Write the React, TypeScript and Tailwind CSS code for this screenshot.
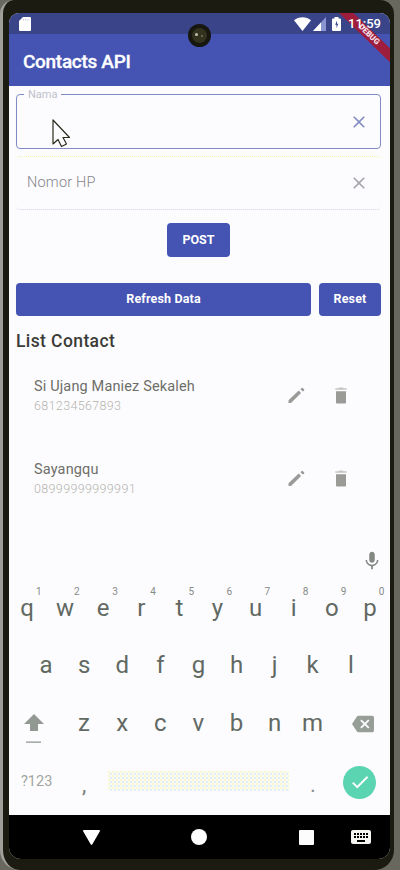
import React from "react";
import { MdMic, MdBackspace, MdKeyboard, MdCheck, MdClose } from "react-icons/md";

const ROW_1 = ["q", "w", "e", "r", "t", "y", "u", "i", "o", "p"];
const ROW_2 = ["a", "s", "d", "f", "g", "h", "j", "k", "l"];
const ROW_3 = ["z", "x", "c", "v", "b", "n", "m"];

const CONTACTS = [
  { name: "Si Ujang Maniez Sekaleh", phone: "681234567893" },
  { name: "Sayangqu", phone: "08999999999991" },
];

function StatusBar() {
  return (
    <div className="flex h-[21px] shrink-0 items-center bg-[#394489] pl-[10px] pr-[9px] text-white">
      <svg width="12" height="14" viewBox="0 0 12 14">
        <path d="M4 0h7a1 1 0 0 1 1 1v12a1 1 0 0 1-1 1H1a1 1 0 0 1-1-1V4z" fill="#fff" />
        <path d="M4.6 2v1.6M6.8 2v1.6M9 2v1.6" stroke="#b6badb" strokeWidth=".7" />
      </svg>
      <svg className="ml-auto" width="17" height="14" viewBox="0 0 17 14">
        <path d="M0 3.3C4.8-.9 12.2-.9 17 3.3L8.5 14z" fill="#fff" />
      </svg>
      <svg className="ml-[2px]" width="13" height="14" viewBox="0 0 13 14">
        <path d="M13 0v14H0z" fill="#8995cf" />
        <path d="M8 5.4V14H0z" fill="#fff" />
      </svg>
      <svg className="ml-[6px]" width="9" height="14" viewBox="0 0 9 14">
        <path d="M2.5 0h4v1.5H8a1 1 0 0 1 1 1V13a1 1 0 0 1-1 1H1a1 1 0 0 1-1-1V2.5a1 1 0 0 1 1-1h1.5z" fill="#fff" />
        <path d="M5 3.5 3.2 7.7h1.3v3.5l1.8-4.4H5z" fill="#394489" />
      </svg>
      <span className="relative z-10 ml-[7px] w-[33px] whitespace-nowrap text-[13px] font-medium leading-none">11:59</span>
    </div>
  );
}

function DebugBanner() {
  return (
    <div className="pointer-events-none absolute right-0 top-0 h-[52px] w-[52px] overflow-hidden">
      <div className="absolute left-[-16px] top-[15px] flex h-[10px] w-[90px] rotate-[44deg] items-center justify-center bg-[#9e1d3c] pl-[5px] text-[8px] font-black text-[#f4dfe6]">
        DEBUG
      </div>
    </div>
  );
}

function PencilIcon() {
  return (
    <svg width="17" height="17" viewBox="0 0 17 17" fill="#9a9a99" aria-hidden="true">
      <path d="M.5 13.2 10.7 3.6l2.4 2.4L3 16H.5z" />
      <path d="m12.4 2.2 1.3-1.3q.5-.4 1 0l1.4 1.4q.4.5 0 1l-1.3 1.3z" />
    </svg>
  );
}

function TrashIcon() {
  return (
    <svg width="12" height="17" viewBox="0 0 12 17" fill="#9a9a97" aria-hidden="true">
      <path d="M1 4.2h10v11q0 1.3-1.3 1.3H2.3Q1 16.500 1 15.200z" />
      <path d="M.3 1.300h3.200l.8-.8h3.400l.8.8h3.200v1.500H.3z" fill="#c4c4c0" />
    </svg>
  );
}

function Key({ label, hint }: { label: string; hint?: string }) {
  return (
    <div className="relative flex h-full w-[38.1px] items-center justify-center text-[24px] text-[#626963]">
      <span className="relative -top-[1px]">{label}</span>
      {hint && <span className="absolute left-[28px] top-[6px] text-[10px] leading-none text-[#858b87]">{hint}</span>}
    </div>
  );
}

export default function App() {
  return (
    <div className="relative flex h-[870px] w-[400px] flex-col overflow-hidden bg-[#68685f] font-['Roboto','Liberation_Sans',sans-serif]">
      <div className="mr-[6px] flex h-[870px] flex-col rounded-t-[14px] rounded-b-[20px] border-l-[3px] border-[#a09f99] bg-[#1b1b12] px-[1px]">
        <div className="relative ml-[5px] mr-[3px] mt-[13px] flex h-[846px] flex-col overflow-hidden rounded-t-[10px] rounded-b-[12px] bg-[#fcfcfe]">
          <StatusBar />
          <header className="flex h-[52px] shrink-0 items-center bg-[#4553b2] pl-[14px] pt-[4px] text-[19px] font-medium tracking-[-0.3px] text-white">
            <h1 className="[-webkit-text-stroke:0.3px_white]">Contacts API</h1>
          </header>

          <main className="flex h-[462px] shrink-0 flex-col pl-[7px] pr-[9px] pt-[8px]">
            <div className="relative flex h-[55px] shrink-0 items-center justify-end rounded-[4px] border-[1.5px] border-[#808bc6] pr-[11px]">
              <span className="absolute left-[7px] top-[-8px] bg-[#fcfcfe] px-[4px] text-[11px] leading-[16px] text-[#c0bfca]">Nama</span>
              <MdClose className="text-[#858ec2]" size={20} />
            </div>
            <div className="mt-[7px] flex h-[54px] shrink-0 items-center justify-between rounded-[4px] border-y border-dotted border-b-[#cfcfe8] border-t-[#f4f4aa] pl-[11px] pr-[12px]">
              <span className="text-[14.5px] font-light tracking-[0.2px] text-[#85858a]">Nomor HP</span>
              <MdClose className="text-[#a6a7ad]" size={20} />
            </div>
            <button className="ml-[151px] mt-[13px] h-[34px] w-[63px] shrink-0 rounded-[4px] bg-[#4553b2] text-[12.5px] font-bold text-white">POST</button>
            <div className="mt-[26px] flex h-[33px] shrink-0 gap-[8px] text-[12.5px] font-bold tracking-[0.15px] text-white">
              <button className="w-[295px] rounded-[4px] bg-[#4553b2]">Refresh Data</button>
              <button className="w-[62px] rounded-[4px] bg-[#4553b2]">Reset</button>
            </div>
            <h2 className="mt-[14px] h-[22px] shrink-0 text-[17.5px] font-medium leading-[22px] tracking-[0.4px] text-[#3b3b37]">List Contact</h2>
            <ul className="mt-[2px]">
              {CONTACTS.map((c) => (
                <li key={c.name} className="flex h-[83px] items-center pl-[18px]">
                  <div className="w-[254px]">
                    <p className="text-[14.5px] leading-[20px] tracking-[0.15px] text-[#6e6e69]">{c.name}</p>
                    <p className="text-[12.5px] font-light leading-[18px] tracking-[0.35px] text-[#b6b5af]">{c.phone}</p>
                  </div>
                  <PencilIcon />
                  <div className="ml-[30px]">
                    <TrashIcon />
                  </div>
                </li>
              ))}
            </ul>
          </main>

          <section className="flex h-[267px] shrink-0 flex-col">
            <div className="flex h-[33px] shrink-0 items-center justify-end pr-[7px]">
              <MdMic size={22} className="mb-[8px] text-[#858984]" />
            </div>
            <div className="ml-[-1px] flex h-[56px] shrink-0 items-center">
              {ROW_1.map((k, i) => (
                <Key key={k} label={k} hint={String((i + 1) % 10)} />
              ))}
            </div>
            <div className="ml-[18px] flex h-[58px] shrink-0 items-center">
              {ROW_2.map((k) => <Key key={k} label={k} />)}
            </div>
            <div className="flex h-[58px] shrink-0 items-center">
              <div className="flex w-[56px] flex-col items-center pr-[6px] pt-[10px]">
                <svg width="20" height="30" viewBox="0 0 20 30" fill="#929992">
                  <path d="M10 0 20 10H14V17H6V10H0z" />
                  <path d="M2 27.500h15v1.300H2z" />
                </svg>
              </div>
              {ROW_3.map((k) => <Key key={k} label={k} />)}
              <MdBackspace size={22} className="mb-[1px] ml-[20px] text-[#979e98]" />
            </div>
            <div className="flex h-[60px] shrink-0 items-center pb-[2px]">
              <span className="w-[56px] pl-[12px] text-[14.5px] text-[#a0a69e]">?123</span>
              <span className="w-[43px] pl-[17px] pt-[4px] text-[22px] text-[#79807b]">,</span>
              <div className="mb-[3px] h-[20px] w-[181px] bg-[#fafbf4] bg-[radial-gradient(circle_at_1px_1px,#f8f5c0_0.6px,transparent_1px),radial-gradient(circle_at_3px_3px,#d8e9f6_0.6px,transparent_1px)] bg-[size:4px_4px]" />
              <span className="w-[54px] pl-[21px] pt-[4px] text-[22px] text-[#8b918c]">.</span>
              <div className="flex h-[33px] w-[33px] items-center justify-center rounded-full bg-[#5bd4b2] text-white">
                <MdCheck size={22} />
              </div>
            </div>
          </section>

          <nav className="flex h-[44px] shrink-0 items-center bg-black">
            <svg className="ml-[74px]" width="17" height="15" viewBox="0 0 17 15"><path d="M.8 0h15.4a.8.8 0 0 1 .7 1.2L9.2 14.4a.8.8 0 0 1-1.4 0L.1 1.2A.8.8 0 0 1 .8 0z" fill="#fff" /></svg>
            <div className="ml-[91px] h-[16px] w-[16px] rounded-full bg-white" />
            <div className="ml-[92px] h-[15px] w-[15px] rounded-[1px] bg-[#fcfcfc]" />
            <MdKeyboard size={24} className="ml-[35px] text-[#f5f5f2]" />
          </nav>
          <DebugBanner />
        </div>
      </div>

      {/* Front camera */}
      <div className="absolute left-[188px] top-[24px] flex h-[23px] w-[23px] items-center justify-center rounded-full bg-[#171710]">
        <div className="relative h-[15px] w-[15px] rounded-full bg-[#32321f]">
          <span className="absolute left-[3px] top-[5px] h-[3px] w-[3px] rounded-full bg-[#c3c1ae]" />
          <span className="absolute left-[9px] top-[7px] h-[2px] w-[2px] rounded-full bg-[#777260]" />
        </div>
      </div>

      {/* Mouse pointer */}
      <svg className="absolute left-[52px] top-[119px]" width="20" height="30" viewBox="0 0 20 30">
        <path d="M1 1V25L6 20.500 9.500 27.500 14.500 25 11 18.500H17.500z" fill="#fcfcfe" stroke="#2b2b1e" strokeWidth="1.200" strokeLinejoin="round" />
      </svg>
    </div>
  );
}
